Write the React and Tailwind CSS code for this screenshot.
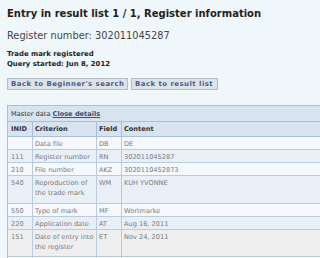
const rows = [
  { inid: "", crit: ["Data file"], field: "DB", content: "DE", bg: "bg-[#f5f8fc]", h: "h-[13px]" },
  { inid: "111", crit: ["Register number"], field: "RN", content: "302011045287", bg: "bg-[#e9eff7]", h: "h-[13px]" },
  { inid: "210", crit: ["File number"], field: "AKZ", content: "3020110452873", bg: "bg-[#f5f8fc]", h: "h-[13px]" },
  { inid: "540", crit: ["Reproduction of", "the trade mark"], field: "WM", content: "KUH YVONNE", bg: "bg-[#e9eff7]", h: "h-[28px]" },
  { inid: "550", crit: ["Type of mark"], field: "MF", content: "Wortmarke", bg: "bg-[#f5f8fc]", h: "h-[13px]" },
  { inid: "220", crit: ["Application date"], field: "AT", content: "Aug 16, 2011", bg: "bg-[#e9eff7]", h: "h-[13px]" },
  { inid: "151", crit: ["Date of entry into", "the register"], field: "ET", content: "Nov 24, 2011", bg: "bg-[#eeeeee]", h: "h-[27px]" },
  { inid: "", crit: [""], field: "", content: "", bg: "bg-[#f5f8fc]", h: "h-[13px]" },
];

const App = () => {
  return (
    <div className="w-[320px] h-[258px] overflow-hidden bg-[#f0f7fb] pl-[7px] font-['DejaVu_Sans',Verdana,sans-serif]">
      <h1 className="pt-[8px] text-[10px] leading-[12px] font-bold text-[#222]">
        Entry in result list 1 / 1, Register information
      </h1>
      <p className="mt-[10px] text-[9.8px] leading-[12px] text-[#444]">Register number: 302011045287</p>
      <div className="mt-[7px] text-[6.9px] leading-[10px] font-bold text-[#222]">
        <p>Trade mark registered</p>
        <p>Query started: Jun 8, 2012</p>
      </div>
      <div className="mt-[9px] flex gap-[3px]">
        <button className="h-[12px] w-[121px] border border-[#b4bcc4] bg-[#dfe3e7] text-left pl-[3px] text-[6.9px] leading-[10px] font-bold tracking-[0.5px] text-[#3d5f92]">
          Back to Beginner's search
        </button>
        <button className="h-[12px] w-[87px] border border-[#b4bcc4] bg-[#dfe3e7] text-left pl-[3px] text-[6.9px] leading-[10px] font-bold tracking-[0.5px] text-[#3d5f92]">
          Back to result list
        </button>
      </div>
      <table className="mt-[15px] w-[360px] table-fixed border-collapse border border-[#a9bfd7] text-[6.6px] leading-[10px]">
        <colgroup>
          <col className="w-[25px]" />
          <col className="w-[64px]" />
          <col className="w-[25px]" />
          <col />
        </colgroup>
        <thead>
          <tr className="h-[16px] bg-[#d7e3ee]">
            <td colSpan={4} className="px-[3px] align-middle text-[#333] border-b border-[#a9bfd7]">
              Master data <a className="font-bold underline text-[#3a5272]">Close details</a>
            </td>
          </tr>
          <tr className="h-[15px] bg-[#d7e3ee] font-bold text-[#333]">
            <td className="px-[3px] border-r border-b border-[#a9bfd7]">INID</td>
            <td className="px-[2px] border-r border-b border-[#a9bfd7]">Criterion</td>
            <td className="px-[2px] border-r border-b border-[#a9bfd7]">Field</td>
            <td className="px-[2px] border-b border-[#a9bfd7]">Content</td>
          </tr>
        </thead>
        <tbody className="text-[#7a7a7a]">
          {rows.map((r, i) => (
            <tr key={i} className={`${r.bg} ${r.h}`}>
              <td className="px-[3px] pt-[2px] align-top border-r border-b border-[#b9cbdd]">{r.inid}</td>
              <td className="px-[2px] pt-[2px] align-top border-r border-b border-[#b9cbdd]">
                {r.crit.map((c, j) => (
                  <div key={j} className="whitespace-nowrap">{c}</div>
                ))}
              </td>
              <td className="px-[2px] pt-[2px] align-top border-r border-b border-[#b9cbdd]">{r.field}</td>
              <td className="px-[2px] pt-[2px] align-top border-b border-[#b9cbdd]">{r.content}</td>
            </tr>
          ))}
        </tbody>
      </table>
    </div>
  );
};

export default App;
